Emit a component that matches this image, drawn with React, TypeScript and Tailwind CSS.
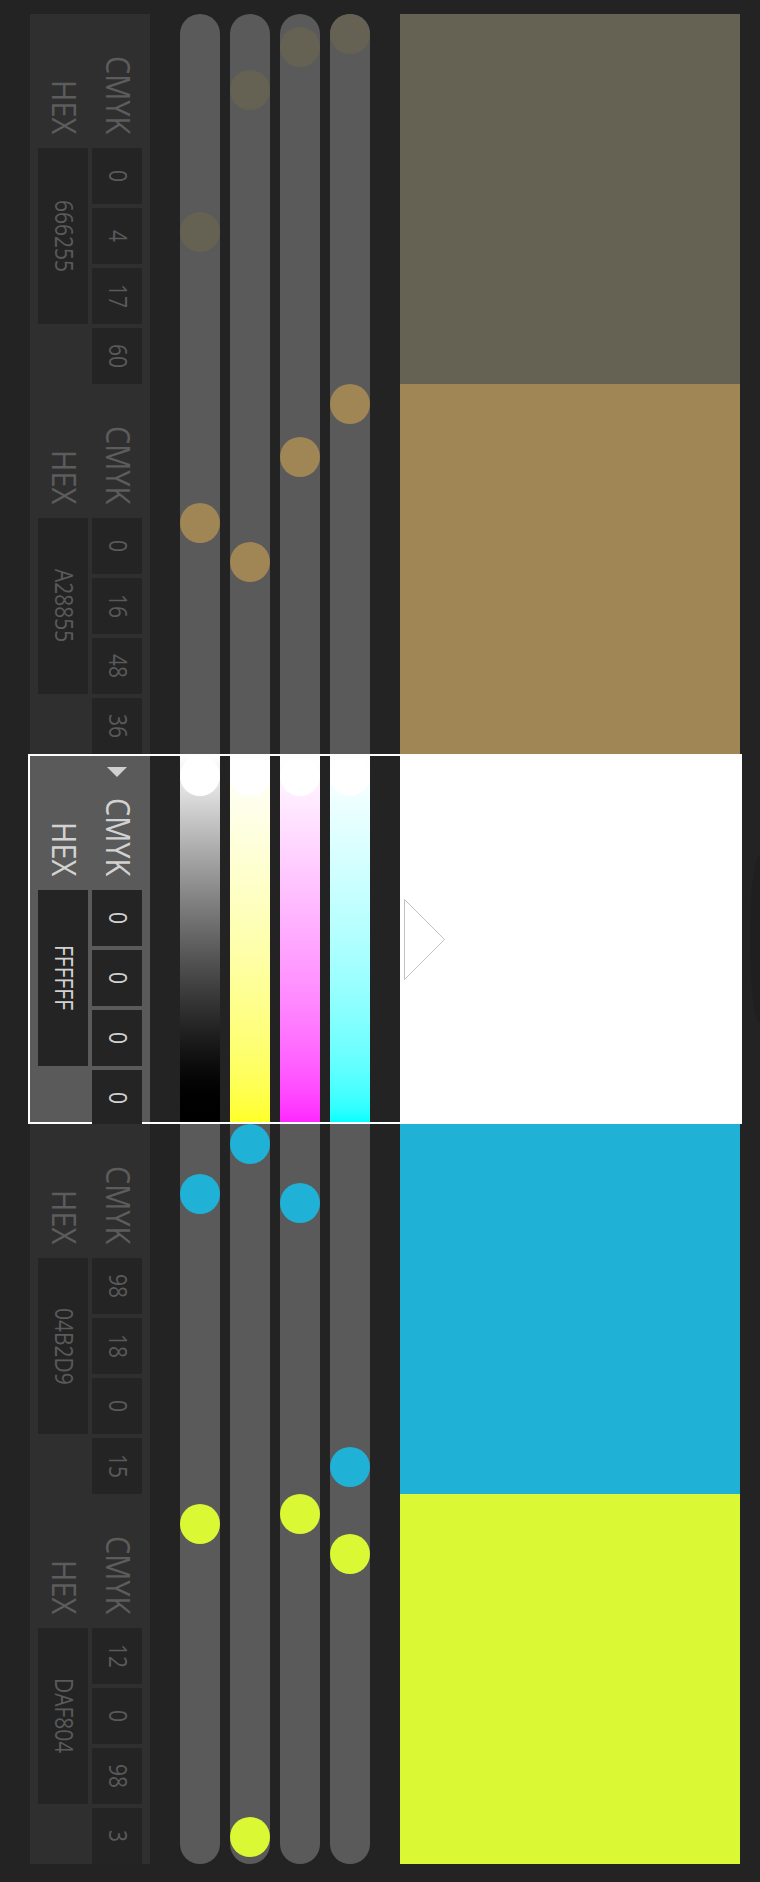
import React from "react";

type Swatch = {
  hex: string;
  cmyk: number[];
  bg: string;
};

const swatches: Swatch[] = [
  { hex: "666255", cmyk: [0, 4, 17, 60], bg: "bg-[#656253]" },
  { hex: "A28855", cmyk: [0, 16, 48, 36], bg: "bg-[#a08555]" },
  { hex: "FFFFFF", cmyk: [0, 0, 0, 0], bg: "bg-white" },
  { hex: "04B2D9", cmyk: [98, 18, 0, 15], bg: "bg-[#1fb1d6]" },
  { hex: "DAF804", cmyk: [12, 0, 98, 3], bg: "bg-[#dbf834]" },
];

const selected = 2;

// screen order left to right: K, Y, M, C
const trackOrder = [3, 2, 1, 0];
const gradients = [
  "bg-linear-to-b from-white to-[#00ffff]",
  "bg-linear-to-b from-white to-[#ff26ff]",
  "bg-linear-to-b from-white to-[#ffff26]",
  "bg-linear-to-b from-white to-black",
];

const Label = ({ children, active }: { children: React.ReactNode; active: boolean }) => (
  <div
    className={`translate-x-[2px] scale-x-[1.15] text-[29px] font-medium leading-none [writing-mode:vertical-rl] ${
      active ? "text-[#d2d2d2]" : "text-[#5c5c5c]"
    }`}
  >
    {children}
  </div>
);

const Value = ({ children, active }: { children: React.ReactNode; active: boolean }) => (
  <div
    className={`scale-x-[1.2] text-[21px] font-medium leading-none [writing-mode:vertical-rl] ${
      active ? "text-[#d2d2d2]" : "text-[#5a5a5a]"
    }`}
  >
    {children}
  </div>
);

const Panel = ({ s, active }: { s: Swatch; active: boolean }) => (
  <div className={`flex h-full w-[120px] shrink-0 flex-col ${active ? "bg-[#5a5a5a]" : "bg-[#2f2f2f]"}`}>
    <div className="grid h-[134px] shrink-0 grid-cols-[50px_50px] items-end gap-x-1 px-2 pb-[14px]">
      <div className="flex flex-col items-center">
        <Label active={active}>HEX</Label>
      </div>
      <div className="flex flex-col items-center">
        {active && (
          <svg width="20" height="10" viewBox="0 0 20 10" className="mb-[21px]">
            <polygon points="0,0 20,0 10,10" fill="#d0d0d0" />
          </svg>
        )}
        <Label active={active}>CMYK</Label>
      </div>
    </div>
    <div className="grid shrink-0 grid-cols-[50px_50px] gap-x-1 px-2">
      <div className="flex h-[176px] items-center justify-center bg-[#242424]">
        <Value active={active}>{s.hex}</Value>
      </div>
      <div className="flex flex-col gap-1">
        {s.cmyk.map((v, i) => (
          <div key={i} className="flex h-14 items-center justify-center bg-[#242424]">
            <Value active={active}>{v}</Value>
          </div>
        ))}
      </div>
    </div>
  </div>
);

const Tracks = ({ s, index, active }: { s: Swatch; index: number; active: boolean }) => (
  <div className="ml-[30px] flex h-full gap-[10px]">
    {trackOrder.map((ch, i) => {
      let shape = "bg-[#5a5a5a]";
      if (active) shape = gradients[ch];
      else if (index === 0) shape = "bg-[#5a5a5a] rounded-t-full";
      else if (index === swatches.length - 1) shape = "bg-[#5a5a5a] rounded-b-full";
      return (
        <div key={i} className={`flex h-full w-10 flex-col ${shape}`}>
          <div
            className={`h-10 w-10 shrink-0 rounded-full ${s.bg}`}
            style={{ marginTop: s.cmyk[ch] * 3.3 }}
          />
        </div>
      );
    })}
  </div>
);

const Row = ({ s, index }: { s: Swatch; index: number }) => {
  const active = index === selected;
  if (active) {
    return (
      <div className="flex h-[370px]">
        <div className="-ml-[2px] flex h-[370px] w-[714px] shrink-0 border-2 border-white">
          <Panel s={s} active />
          <Tracks s={s} index={index} active />
          <div className="ml-[30px] flex flex-1 items-center bg-white pl-1">
            <svg width="41" height="81" viewBox="0 0 41 81">
              <polygon points="0.5,0.5 40.5,40.5 0.5,80.5" fill="none" stroke="#c2c2c2" strokeWidth="1" />
            </svg>
          </div>
        </div>
        <div className="ml-[8px] h-[168px] w-[10px] self-center rounded-tl-[100%_50%] rounded-bl-[100%_50%] bg-[#1f1f1f]" />
      </div>
    );
  }
  return (
    <div className="flex h-[370px]">
      <Panel s={s} active={false} />
      <Tracks s={s} index={index} active={false} />
      <div className={`ml-[30px] h-full w-[340px] ${s.bg}`} />
    </div>
  );
};

export default function App() {
  return (
    <div className="h-[1882px] w-[760px] overflow-hidden bg-[#232323] pl-[30px] pt-[14px] font-['Open_Sans',sans-serif]">
      {swatches.map((s, i) => (
        <Row key={s.hex} s={s} index={i} />
      ))}
    </div>
  );
}
